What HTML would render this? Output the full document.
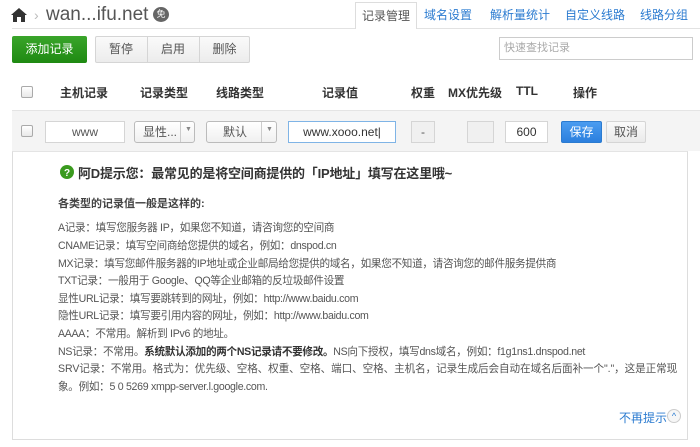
<!DOCTYPE html>
<html><head><meta charset="utf-8"><style>
*{margin:0;padding:0;box-sizing:border-box}
body{width:700px;height:447px;background:#fff;font-family:"Liberation Sans","Noto Sans CJK SC",sans-serif;color:#333;position:relative;overflow:hidden;font-size:12px}
.a{position:absolute}
.tab{position:absolute;top:2px;height:27px;line-height:27px;color:#2b7bd0;font-size:12px;text-align:center}
.btn{position:absolute;top:36px;height:27px;line-height:27px;text-align:center;font-size:12px}
.th{position:absolute;top:84px;font-weight:bold;font-size:12px;color:#333;transform:translateX(-50%);white-space:nowrap}
.inp{position:absolute;top:121px;height:22px;background:#fff;border:1px solid #d5d5d5;text-align:center;line-height:20px;font-size:12px;color:#555}
.cb{position:absolute;width:12px;height:12px;border:1px solid #aaa;border-radius:2px;background:linear-gradient(#fff,#e8e8e8)}
.ln{position:absolute;left:58px;font-size:10.6px;letter-spacing:-0.3px;color:#555;white-space:nowrap}
</style></head><body>
<svg class="a" style="left:11px;top:8px" width="16" height="14" viewBox="0 0 16 14"><path d="M8 0L0 7h2v7h4V9h4v5h4V7h2z" fill="#333"/></svg>
<div class="a" style="left:34px;top:7px;color:#bbb;font-size:14px">›</div>
<div class="a" style="left:46px;top:4px;font-size:19px;color:#555">wan...ifu.net</div>
<div class="a" style="left:153px;top:7px;width:16px;height:15px;border-radius:50%;background:#666;color:#fff;font-size:9px;line-height:15px;text-align:center">免</div>
<div class="a" style="left:12px;top:28px;width:343px;height:1px;background:#e2e2e2"></div>
<div class="a" style="left:416px;top:28px;width:284px;height:1px;background:#e2e2e2"></div>
<div class="tab" style="left:355px;width:62px;border:1px solid #ddd;border-bottom:none;background:#fff;color:#555">记录管理</div>
<div class="tab" style="left:416px;width:64px">域名设置</div>
<div class="tab" style="left:485px;width:70px">解析量统计</div>
<div class="tab" style="left:560px;width:70px">自定义线路</div>
<div class="tab" style="left:635px;width:58px">线路分组</div>
<div class="btn" style="left:12px;width:75px;background:linear-gradient(#3aa52a,#1f8a12);color:#fff;border-radius:2px">添加记录</div>
<div class="btn" style="left:95px;width:155px;border:1px solid #d5d5d5;background:linear-gradient(#fafafa,#ececec);border-radius:2px"></div>
<div class="btn" style="left:95px;width:52px;color:#555">暂停</div>
<div class="a" style="left:147px;top:37px;width:1px;height:26px;background:#d5d5d5"></div>
<div class="btn" style="left:147px;width:52px;color:#555">启用</div>
<div class="a" style="left:199px;top:37px;width:1px;height:26px;background:#d5d5d5"></div>
<div class="btn" style="left:199px;width:51px;color:#555">删除</div>
<div class="a" style="left:499px;top:37px;width:194px;height:23px;border:1px solid #ccc;color:#aaa;font-size:11px;line-height:21px;padding-left:4px">快速查找记录</div>
<div class="cb" style="left:21px;top:86px"></div>
<div class="th" style="left:84px">主机记录</div>
<div class="th" style="left:164px">记录类型</div>
<div class="th" style="left:240px">线路类型</div>
<div class="th" style="left:340px">记录值</div>
<div class="th" style="left:423px">权重</div>
<div class="th" style="left:475px">MX优先级</div>
<div class="th" style="left:527px">TTL</div>
<div class="th" style="left:585px">操作</div>
<div class="a" style="left:12px;top:110px;width:688px;height:41px;background:#f4f4f4;border-top:1px solid #e4e4e4"></div>
<div class="cb" style="left:21px;top:125px"></div>
<div class="inp" style="left:45px;width:80px">www</div>
<div class="inp" style="left:134px;width:61px;border-radius:3px;background:linear-gradient(#fff,#f0f0f0);border-color:#bbb;text-align:left;padding-left:8px">显性...</div>
<div class="a" style="left:180px;top:122px;width:1px;height:20px;background:#ccc"></div>
<div class="a" style="left:185px;top:126px;color:#888;font-size:7px">▼</div>
<div class="inp" style="left:206px;width:71px;border-radius:3px;background:linear-gradient(#fff,#f0f0f0);border-color:#bbb;text-align:left;padding-left:16px">默认</div>
<div class="a" style="left:261px;top:122px;width:1px;height:20px;background:#ccc"></div>
<div class="a" style="left:266px;top:126px;color:#888;font-size:7px">▼</div>
<div class="inp" style="left:288px;width:108px;border-color:#7fb4e6;color:#333">www.xooo.net|</div>
<div class="inp" style="left:411px;width:24px;background:#f0f0f0">-</div>
<div class="inp" style="left:467px;width:27px;background:#f0f0f0"></div>
<div class="inp" style="left:505px;width:43px;color:#333">600</div>
<div class="inp" style="left:561px;width:41px;background:linear-gradient(#4a9cf0,#2b7fde);border-color:#2b7bd0;color:#fff;border-radius:2px">保存</div>
<div class="inp" style="left:606px;width:40px;background:linear-gradient(#fafafa,#eaeaea);border-radius:2px">取消</div>
<div class="a" style="left:12px;top:151px;width:676px;height:289px;border:1px solid #ddd;border-top:1px solid #e4e4e4;background:#fff"></div>
<svg class="a" style="left:60px;top:165px" width="14" height="14" viewBox="0 0 14 14"><circle cx="7" cy="7" r="7" fill="#3a9a1e"/><text x="7" y="11" font-size="10" font-weight="bold" fill="#fff" text-anchor="middle" font-family="Liberation Sans">?</text></svg>
<div class="a" style="left:78px;top:163px;font-size:13px;font-weight:bold;color:#333;letter-spacing:-0.2px">阿D提示您：最常见的是将空间商提供的「IP地址」填写在这里哦~</div>
<div class="a" style="left:58px;top:195px;font-size:11px;font-weight:bold;color:#444">各类型的记录值一般是这样的:</div>
<div class="ln" style="top:220px">A记录：填写您服务器 IP，如果您不知道，请咨询您的空间商</div>
<div class="ln" style="top:238px">CNAME记录：填写空间商给您提供的域名，例如：dnspod.cn</div>
<div class="ln" style="top:256px">MX记录：填写您邮件服务器的IP地址或企业邮局给您提供的域名，如果您不知道，请咨询您的邮件服务提供商</div>
<div class="ln" style="top:273px">TXT记录：一般用于 Google、QQ等企业邮箱的反垃圾邮件设置</div>
<div class="ln" style="top:291px">显性URL记录：填写要跳转到的网址，例如：http://www.baidu.com</div>
<div class="ln" style="top:308px">隐性URL记录：填写要引用内容的网址，例如：http://www.baidu.com</div>
<div class="ln" style="top:326px">AAAA：不常用。解析到 IPv6 的地址。</div>
<div class="ln" style="top:344px">NS记录：不常用。<b style="color:#333">系统默认添加的两个NS记录请不要修改。</b>NS向下授权，填写dns域名，例如：f1g1ns1.dnspod.net</div>
<div class="ln" style="top:361px;letter-spacing:-0.1px">SRV记录：不常用。格式为：优先级、空格、权重、空格、端口、空格、主机名，记录生成后会自动在域名后面补一个"."，这是正常现</div>
<div class="ln" style="top:379px">象。例如：5 0 5269 xmpp-server.l.google.com.</div>
<div class="a" style="left:619px;top:409px;font-size:12px;color:#2b7bd0">不再提示</div>
<div class="a" style="left:667px;top:409px;width:14px;height:14px;border-radius:50%;border:1px solid #ccc;background:#f6f6f6;color:#2b7bd0;font-size:9px;line-height:13px;text-align:center">^</div>
</body></html>
